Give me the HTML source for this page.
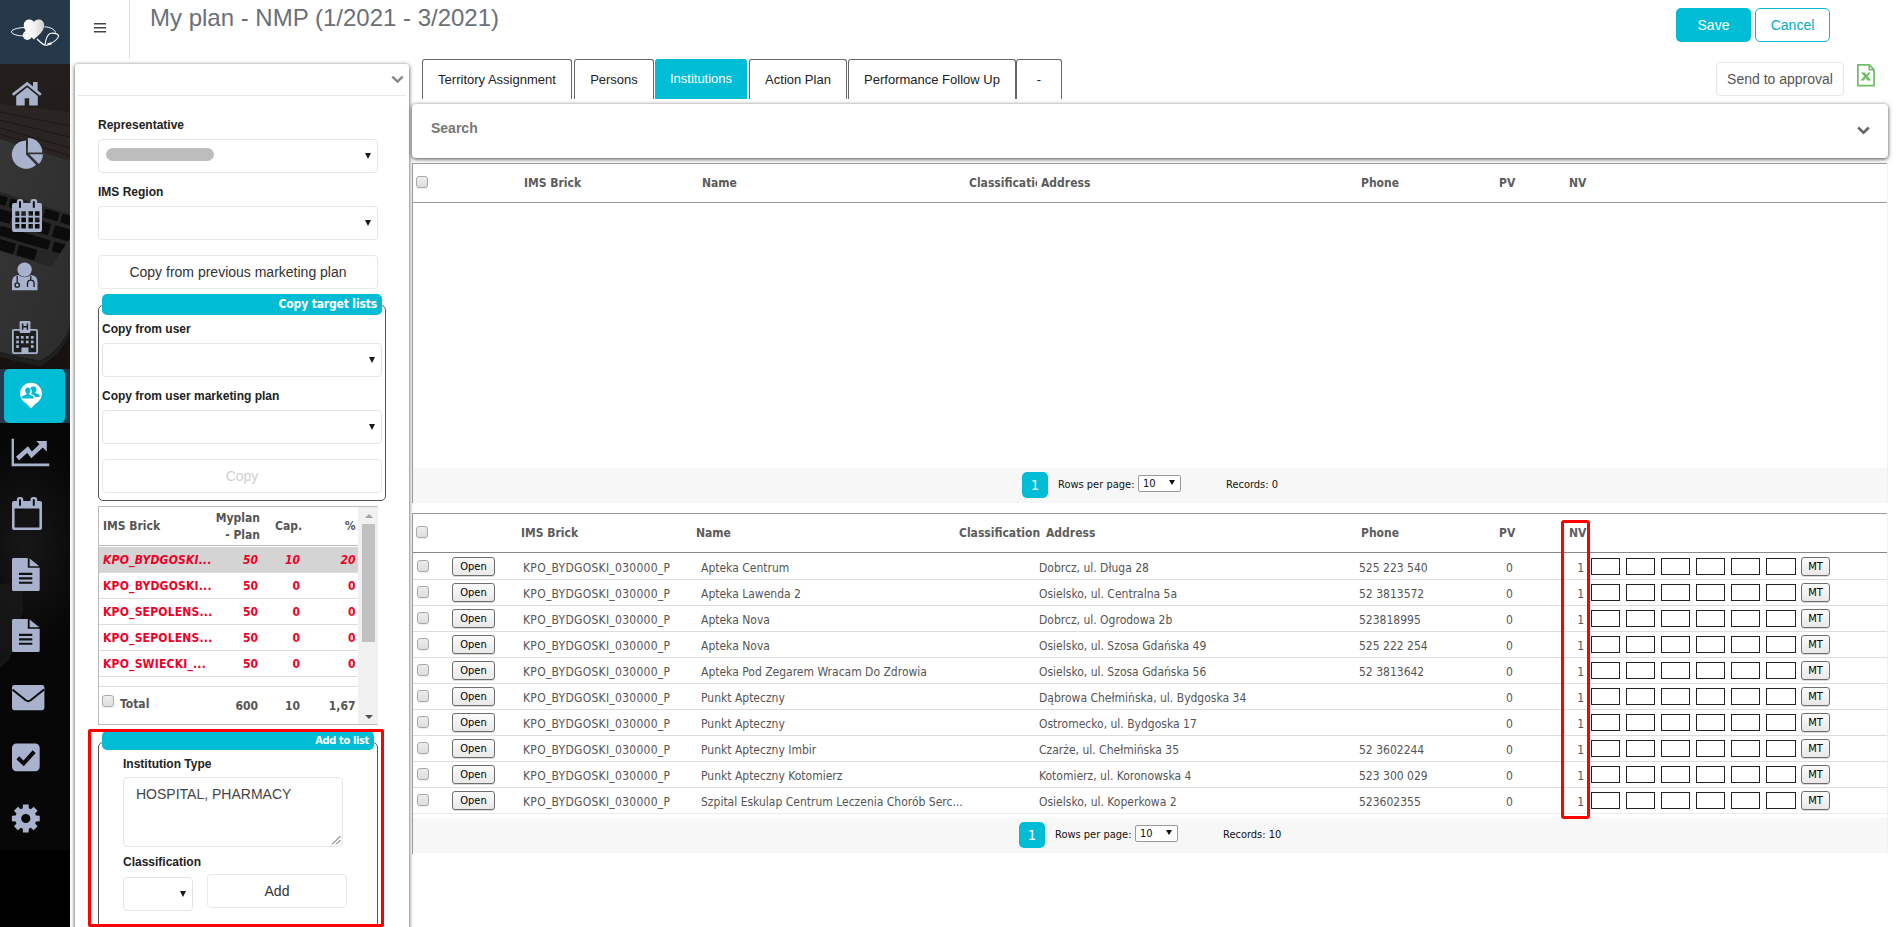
<!DOCTYPE html>
<html lang="en"><head><meta charset="utf-8"><title>My plan - NMP</title>
<style>
*{box-sizing:border-box}
html,body{margin:0;padding:0}
body{width:1897px;height:927px;overflow:hidden;background:#fff;position:relative;font-family:"Liberation Sans",sans-serif;color:#222}
#sb{position:absolute;left:0;top:0;width:70px;height:927px;background:#000;overflow:hidden}
#sb .logo{position:absolute;left:0;top:0;width:70px;height:64px;background:#26394a}
#sb svg.bg{position:absolute;left:0;top:64px}
#sb .ic{position:absolute;fill:#a8b2cd}
#sb .actband{position:absolute;left:0;top:369px;width:70px;height:54px;background:#263849}
#sb .act{position:absolute;left:4px;top:369px;width:61px;height:54px;background:#00bcd4;border-radius:5px}
#hdr .burger{position:absolute;left:94px;top:23px}
#hdr .vline{position:absolute;left:129px;top:0;width:1px;height:59px;background:#dcdcdc}
#hdr h1{position:absolute;left:150px;top:3px;margin:0;font-size:24px;font-weight:normal;color:#6a6f78;line-height:30px;white-space:nowrap}
.btn{position:absolute;top:8px;height:34px;width:75px;border-radius:5px;font-size:14px;line-height:34px;text-align:center}
.btn.save{left:1676px;background:#00bcd4;color:#fff}
.btn.cancel{left:1755px;border:1px solid #00bcd4;color:#00acc8;line-height:32px;background:#fff}
/* left panel */
#lp{position:absolute;left:75px;top:64px;width:334px;height:900px;background:#fff;border-radius:3px;box-shadow:0 1px 4px rgba(0,0,0,.75)}
#lp .in{position:absolute;left:0;top:-1px;width:334px;height:900px}
#lp .chev{position:absolute;left:316px;top:12px}
#lp .hl{position:absolute;left:3px;top:32px;width:328px;height:1px;background:#e1e8ec}
.lbl{position:absolute;font-size:12px;font-weight:bold;color:#222;white-space:nowrap;line-height:14px}
.selbox{position:absolute;height:34px;border:1px solid #e3e6e8;border-radius:4px;background:#fff}
.selbox:after{content:"";position:absolute;right:6.5px;top:12.8px;border-left:3.5px solid transparent;border-right:3.5px solid transparent;border-top:6px solid #1a1a1a}
.wbtn{position:absolute;height:34px;border:1px solid #e6e8ea;border-radius:4px;background:#fff;font-size:14px;line-height:32px;text-align:center;color:#333;white-space:nowrap}
.fs{position:absolute;border:1px solid #555;border-radius:5px}
.lg{position:absolute;background:#00bcd4;border-radius:5px;color:#fff;font-family:"DejaVu Sans Condensed","DejaVu Sans",sans-serif;font-stretch:condensed;font-weight:bold;font-size:12px;text-align:right;white-space:nowrap;letter-spacing:-.4px}
/* brick table */
#bt{position:absolute;left:23px;top:443px;width:280px;height:219px;border:1px solid #bbb;border-right-color:#f1f1f1;font-family:"DejaVu Sans Condensed","DejaVu Sans",sans-serif;font-stretch:condensed;font-size:12px;font-weight:bold;overflow:hidden;background:#fff}
#bt .hd{position:absolute;left:0;top:0;width:260px;height:38px;border-bottom:1px solid #bbb;color:#555}
#bt .hd span{position:absolute;white-space:nowrap;line-height:17px}
#bt .br{position:absolute;left:0;width:260px;height:26px;border-bottom:1px solid #ddd;color:#f00028;line-height:26px}
#bt .br.sel{background:#d4d4d4;font-style:italic}
#bt .br span{position:absolute;top:0;white-space:nowrap}
#bt .b1{left:4px;letter-spacing:.2px}
#bt .b2{right:101px}
#bt .b3{right:59px}
#bt .b4{right:3.5px}
#bt .tot{position:absolute;left:0;top:178px;width:260px;height:38px;border-top:1px solid #ddd;color:#555;font-size:12px}
#bt .tot span{position:absolute;white-space:nowrap;line-height:16px}
#bt .sc{position:absolute;left:259px;top:-1px;width:19px;height:218px;background:#f1f1f1}
#bt .sc .th{position:absolute;left:4px;top:17px;width:13px;height:118px;background:#c1c1c1}
#bt .sc .up{position:absolute;left:6.5px;top:7px;border-left:4px solid transparent;border-right:4px solid transparent;border-bottom:4px solid #a3a3a3}
#bt .sc .dn{position:absolute;left:6.5px;top:208px;border-left:4px solid transparent;border-right:4px solid transparent;border-top:4px solid #505050}
.cb{position:absolute;width:12px;height:12px;border:1px solid #a9a9a9;border-radius:3px;background:linear-gradient(#ededed,#dedede);box-shadow:0 1px 1px rgba(0,0,0,.08)}
.ta{position:absolute;border:1px solid #e3e6e8;border-radius:4px;font-size:14px;color:#444;white-space:nowrap}
/* tabs */
.tab{position:absolute;top:59px;height:40px;border:1px solid #666;border-bottom:none;border-radius:3px 3px 0 0;font-size:13px;line-height:39px;text-align:center;color:#222;background:#fff;white-space:nowrap}
.tab.act{background:#00bcd4;border-color:#00bcd4;color:#fff;line-height:37px}
.send{position:absolute;left:1716px;top:62px;width:128px;height:34px;border:1px solid #e6e6e6;border-radius:4px;font-size:14px;line-height:32px;text-align:center;color:#555;white-space:nowrap}
.xls{position:absolute;left:1857px;top:64px}
#search{position:absolute;left:412px;top:104px;width:1476px;height:54px;background:#fff;border-radius:4px;box-shadow:0 1px 4px rgba(0,0,0,.75)}
#search span{position:absolute;left:19px;top:16px;font-size:14px;font-weight:bold;color:#777;line-height:16px}
#search svg{position:absolute;left:1445px;top:22px}
/* grids */
.grid{position:absolute;left:412px;width:1476px;font-family:"DejaVu Sans Condensed","DejaVu Sans",sans-serif;font-stretch:condensed;font-size:12px;color:#555}
.grid:before{content:"";position:absolute;left:0;top:0;bottom:0;width:1px;background:#999;z-index:2}
#g1{top:163px;height:340px}
#g2{top:513px;height:341px}
.gh{position:absolute;left:0;top:0;width:1475px;height:40px;border-top:1px solid #999;border-bottom:1px solid #999}
.gh b{position:absolute;top:11px;line-height:16px;font-size:12px;white-space:nowrap;color:#5c5c5c}
#g2 .gh{border-bottom:1px solid #888}
.pg{position:absolute;left:0;width:1475px;height:35px;background:#f7f7f7;font-size:11px;color:#111}
.pg .p1{position:absolute;top:4px;width:26px;height:26px;background:#00bcd4;border-radius:5px;color:#fff;font-size:14px;line-height:26px;text-align:center}
.pg .t{position:absolute;top:10px;line-height:14px;white-space:nowrap}
.pg .sel{position:absolute;top:7px;width:43px;height:17px;border:1px solid #999;border-radius:2px;background:#fff;line-height:16px;padding-left:4px}
.pg .sel i{position:absolute;right:5.5px;top:3.5px;border-left:3.2px solid transparent;border-right:3.2px solid transparent;border-top:5.5px solid #111}
.r{position:absolute;left:0;width:1475px;height:26px;border-bottom:1px solid #ddd}
.r .c{position:absolute;top:6.6px;line-height:15px;white-space:nowrap}
.r .brick{left:111px;letter-spacing:.27px}
.r .nv{left:1160px;width:12px;text-align:right}
.ob,.mt{position:absolute;top:3px;height:19px;border:1px solid #6e6e6e;border-radius:3px;background:linear-gradient(#fbfbfb,#e9e9e9);color:#000;font-size:11px;line-height:17px;text-align:center;box-shadow:0 1px 0 rgba(0,0,0,.15)}
.ob{left:40px;width:43px}
.mt{left:1389px;width:29px}
.bx{position:absolute;top:4px;width:29.5px;height:17px;border:1.5px solid #222;background:#fff}
.red{position:absolute;border:3px solid #f00;border-radius:3px}
.r.last{border-bottom-color:#ececec}
#bt .w{position:absolute;left:0;top:1px;width:279px;height:218px}
.grid:after{content:"";position:absolute;right:0;top:0;bottom:0;width:1px;background:#f2f2f2}

</style></head>
<body>
<div id="sb">
<svg class="bg" width="70" height="786" viewBox="0 64 70 786">
<defs><linearGradient id="lg1" x1="0" y1="0" x2="0" y2="1"><stop offset="0" stop-color="#241f1c"/><stop offset="1" stop-color="#1f1b19"/></linearGradient>
<radialGradient id="rg"><stop offset="0" stop-color="#171717"/><stop offset="1" stop-color="#060606"/></radialGradient><linearGradient id="lg2" x1="0" y1="0" x2="1" y2="1"><stop offset="0" stop-color="#363636"/><stop offset="1" stop-color="#2c2c2c"/></linearGradient></defs>
<rect x="0" y="64" width="70" height="786" fill="#060606"/>
<rect x="0" y="64" width="70" height="110" fill="url(#lg1)"/>
<path d="M0 104 L70 112 L70 161 L0 139Z" fill="#2a2522"/><path d="M0 112 L70 126 M0 120 L70 137 M0 128 L70 148 M0 134 L70 156" stroke="#1d1917" stroke-width="1.2" fill="none"/><path d="M0 139 L70 161 L70 326 Q62 350 40 361 Q20 358 0 352Z" fill="url(#lg2)"/>
<clipPath id="kb"><path d="M0 192 L70 214 L70 238 L51 267 L0 251Z"/></clipPath><g clip-path="url(#kb)"><rect x="0" y="185" width="70" height="90" fill="#262626"/><g transform="translate(0 193) rotate(16.5)" fill="#0b0b0b"><rect x="-6" y="2" width="15" height="9" rx="1.5"/><rect x="12" y="2" width="15" height="9" rx="1.5"/><rect x="30" y="2" width="15" height="9" rx="1.5"/><rect x="48" y="2" width="15" height="9" rx="1.5"/><rect x="66" y="2" width="14" height="9" rx="1.5"/><rect x="-12" y="15" width="30" height="12" rx="1.5"/><rect x="22" y="15" width="17" height="12" rx="1.5"/><rect x="43" y="15" width="15" height="12" rx="1.5"/><rect x="62" y="15" width="18" height="12" rx="1.5"/><rect x="-8" y="31" width="14" height="10" rx="1.5"/><rect x="10" y="31" width="52" height="10" rx="1.5"/><rect x="66" y="31" width="14" height="10" rx="1.5"/><rect x="-10" y="44" width="12" height="11" rx="1.5"/><rect x="6" y="44" width="24" height="11" rx="1.5"/><rect x="33" y="44" width="19" height="11" rx="1.5"/></g></g>
<path d="M0 352 Q20 358 40 361 Q62 350 70 326 L70 369 L0 369Z" fill="#17110f"/>
<path d="M0 352 Q20 358 40 361 Q62 350 70 326 L70 332 Q62 355 40 366 Q20 363 0 357Z" fill="#1f1f1f"/>
<ellipse cx="25" cy="545" rx="70" ry="110" fill="url(#rg)"/><path d="M0 585 L0 668 L9 660 L16 640 L23 610 L22 580Z" fill="#1b1b1b" opacity=".7"/>
</svg>
<div class="logo"></div>
<svg style="position:absolute;left:0;top:0" width="70" height="64" viewBox="0 0 70 64">
<defs><linearGradient id="hg" x1="0" y1="0" x2="1" y2="0"><stop offset="0" stop-color="#fff"/><stop offset=".5" stop-color="#f4f4f4"/><stop offset="1" stop-color="#cfcfcf"/></linearGradient></defs>
<path d="M24 27.5 C16 28 11 30 11.5 32 C12 34.5 18 35.8 24 36" fill="none" stroke="#fff" stroke-width="1"/>
<path d="M44.5 26.8 C50 27 55 29.5 55.5 32.5" fill="none" stroke="#fff" stroke-width="1"/>
<path d="M34 39.5 C30 36 23.8 31 23.8 25.5 C23.8 21.5 26.6 19.6 29.5 19.6 C31.6 19.6 33.2 20.8 34 22 C34.8 20.8 36.4 19.6 38.5 19.6 C41.4 19.6 44.2 21.5 44.2 25.5 C44.2 31 38 36 34 39.5Z" fill="url(#hg)"/>
<circle cx="27.4" cy="35.3" r="4.6" fill="#fff"/><circle cx="26.6" cy="35.6" r="2.6" fill="none" stroke="#e4e4e4" stroke-width="1"/>
<path d="M37 39 C40 42 42.5 44.5 45.5 45.3" fill="none" stroke="#fff" stroke-width="1.2"/>
<path d="M45 45.2 C45.5 40 47.5 35 50 33.5 C53 32.6 57.5 33.3 58.7 35.5 C58 39 53 42.5 49.5 44.2 L46 45.5" fill="none" stroke="#fff" stroke-width="1.1"/>
<rect x="47.5" y="42.7" width="4" height="2.2" fill="#fff" transform="rotate(-12 49.5 43.8)"/>
</svg>
<svg class="ic" style="left:11px;top:81px" width="32" height="25" viewBox="0 0 32 25" ><path d="M0.9 12.8 L16.2 0.7 L30.7 12.8 L29 14.8 L16.2 4.2 L2.6 14.8Z"/><rect x="22" y="1" width="4.6" height="8"/><path d="M5.2 15 L16.2 6.2 L26.8 15 V24.4 H18.2 V17.3 H13.7 V24.4 H5.2Z"/></svg>
<svg class="ic" style="left:11px;top:137px" width="33" height="32" viewBox="0 0 33 32" ><path d="M15 17.6 L15 3.400000000000002 A14.2 14.2 0 1 0 25.04 27.64Z"/><path d="M16.9 15.5 V1.1 A14.4 14.4 0 0 1 31.3 15.5Z"/><path d="M18.3 17.3 H31.9 A13.6 13.6 0 0 1 27.9 26.9Z"/></svg>
<svg class="ic" style="left:12px;top:199px" width="30" height="33" viewBox="0 0 30 33" ><path fill-rule="evenodd" d="M2 4 H28 a2 2 0 0 1 2 2 V31 a2 2 0 0 1 -2 2 H2 a2 2 0 0 1 -2 -2 V6 a2 2 0 0 1 2-2Z M3.3 12.2H7.4V16.7H3.3Z M3.3 18.4H7.4V23.2H3.3Z M3.3 25.1H7.4V29.6H3.3Z M9.3 12.2H13.9V16.7H9.3Z M9.3 18.4H13.9V23.2H9.3Z M9.3 25.1H13.9V29.6H9.3Z M16.5 12.2H21V16.7H16.5Z M16.5 18.4H21V23.2H16.5Z M16.5 25.1H21V29.6H16.5Z M22.9 12.2H27.5V16.7H22.9Z M22.9 18.4H27.5V23.2H22.9Z M22.9 25.1H27.5V29.6H22.9Z "/><rect x="4.8" y="0" width="6.5" height="9.5" rx="3"/><rect x="18.4" y="0" width="6.9" height="9.5" rx="3"/><rect x="7" y="2.3" width="2" height="6.5" fill="#111"/><rect x="20.8" y="2.3" width="2" height="6.5" fill="#111"/></svg>
<svg class="ic" style="left:12px;top:262px" width="26" height="29" viewBox="0 0 26 29" ><circle cx="12.6" cy="7.6" r="7.2"/><path d="M0 28.3 V20 Q0 13.5 6.5 13 Q12.6 17.5 19 13 Q25.5 13.5 25.5 20 V28.3 Z"/><path d="M5.2 14 V20.5" stroke="#1c1c1c" stroke-width="1.3" fill="none"/><circle cx="5.2" cy="23" r="2.2" fill="none" stroke="#1c1c1c" stroke-width="1.3"/><path d="M15.5 25 V21.5 a3.3 3.3 0 0 1 6.6 0 V25 M18.8 14 V18" stroke="#1c1c1c" stroke-width="1.3" fill="none"/></svg>
<svg class="ic" style="left:12px;top:321px" width="26" height="33" viewBox="0 0 26 33" ><rect x="0.9" y="8.9" width="24.2" height="23.2" rx="1" fill="#1d1d1d" stroke="#a8b2cd" stroke-width="1.8"/><rect x="7.6" y="0" width="10.8" height="11.9" rx="1.2" fill="#a8b2cd"/><path d="M10.6 2.6 V8.8 M15.4 2.6 V8.8 M10.6 5.7 H15.4" stroke="#1d1d1d" stroke-width="1.5" fill="none"/><rect x="4.2" y="15" width="2.7" height="2.7"/><rect x="4.2" y="19.6" width="2.7" height="2.7"/><rect x="4.2" y="24.2" width="2.7" height="2.7"/><rect x="8.9" y="15" width="2.7" height="2.7"/><rect x="8.9" y="19.6" width="2.7" height="2.7"/><rect x="13.9" y="15" width="2.7" height="2.7"/><rect x="13.9" y="19.6" width="2.7" height="2.7"/><rect x="18.9" y="15" width="2.7" height="2.7"/><rect x="18.9" y="19.6" width="2.7" height="2.7"/><rect x="18.9" y="24.2" width="2.7" height="2.7"/><rect x="9.5" y="26.5" width="7" height="6"/></svg>
<div class="actband"></div><div class="act"></div>
<svg style="position:absolute;left:19px;top:381px" width="24" height="29" viewBox="0 0 24 29">
<circle cx="12" cy="12.6" r="10.9" fill="#fff"/><path d="M6 21 L12 27.4 L18 21Z" fill="#fff"/>
<g fill="#00bcd4"><path d="M8.8 6.6 c1.6 0 2.7 1.2 2.7 2.9 c0 1.3-.6 2.3-1.3 2.9 v1 c1.6.6 3.6 1.2 4.2 2 c.4.5.5 1.3.5 2.1 H2.8 c0-.8.1-1.6.5-2.1 c.6-.8 2.6-1.4 4.2-2 v-1 c-.7-.6-1.3-1.6-1.3-2.9 c0-1.7 1.100-2.9 2.600-2.900Z"/>
<path d="M14.900 5.600 c1.500 0 2.600 1.200 2.600 2.800 c0 1.200-.5 2.200-1.200 2.800 v.9 c1.500.6 3.300 1.100 3.900 1.900 c.4.500.5 1.200.5 2 H16 c-.2-.8-.6-1.300-1.300-1.700 c-.8-.5-1.900-.9-2.800-1.200 c.5-.7.900-1.500.9-2.600 c0-1.500-.6-2.500-1.500-3.100 c.4-1.100 1.400-1.800 2.600-1.800Z"/></g></svg>
<svg class="ic" style="left:11px;top:438px" width="39" height="29" viewBox="0 0 39 29" ><path d="M0.6 0.8 H3 V25.5 H38.2 V28.3 H0.6Z"/><path d="M6.5 20.5 L16.6 11.6 L20.6 16.9 L31 7" fill="none" stroke="#a8b2cd" stroke-width="4.6"/><path d="M25.2 3 H35.8 V13.6Z"/></svg>
<svg class="ic" style="left:12px;top:497px" width="30" height="33" viewBox="0 0 30 33" ><path fill-rule="evenodd" d="M2 4 H28 a2 2 0 0 1 2 2 V31 a2 2 0 0 1 -2 2 H2 a2 2 0 0 1 -2 -2 V6 a2 2 0 0 1 2-2Z M2.6 11.6 H27.4 V30.4 H2.6Z"/><rect x="4.8" y="0" width="6.5" height="9.5" rx="3"/><rect x="18.4" y="0" width="6.9" height="9.5" rx="3"/><rect x="7" y="2.3" width="2" height="6.5" fill="#111"/><rect x="20.8" y="2.3" width="2" height="6.5" fill="#111"/></svg>
<svg class="ic" style="left:12px;top:558px" width="28" height="33" viewBox="0 0 28 33" ><path d="M1.5 0 H15.8 V9.8 H27.7 V31.5 a1.5 1.5 0 0 1 -1.5 1.5 H1.5 a1.5 1.5 0 0 1 -1.5 -1.5 V1.5 a1.5 1.5 0 0 1 1.5-1.5Z"/><path d="M17.6 0.4 L27.3 8.2 H17.6Z"/><path d="M7 15.9 H20.3 M7 20.4 H20.3 M7 24.7 H20.3" stroke="#111" stroke-width="2.1" fill="none"/></svg>
<svg class="ic" style="left:12px;top:619px" width="28" height="33" viewBox="0 0 28 33" ><path d="M1.5 0 H15.8 V9.8 H27.7 V31.5 a1.5 1.5 0 0 1 -1.5 1.5 H1.5 a1.5 1.5 0 0 1 -1.5 -1.5 V1.5 a1.5 1.5 0 0 1 1.5-1.5Z"/><path d="M17.6 0.4 L27.3 8.2 H17.6Z"/><path d="M7 15.9 H20.3 M7 20.4 H20.3 M7 24.7 H20.3" stroke="#111" stroke-width="2.1" fill="none"/></svg>
<svg class="ic" style="left:12px;top:685px" width="33" height="26" viewBox="0 0 33 26" ><rect x="0" y="0" width="32.4" height="25.2" rx="2.6"/><path d="M0.3 4.5 L13.8 15.2 Q16.2 17 18.6 15.2 L32.1 4.5" fill="none" stroke="#0a0a0a" stroke-width="2"/></svg>
<svg class="ic" style="left:12px;top:743px" width="28" height="29" viewBox="0 0 28 29" ><rect x="0" y="0.4" width="27.7" height="27.9" rx="4.5"/><path d="M5.8 14.8 L11.6 20.4 L22.2 8.6" fill="none" stroke="#0a0a0a" stroke-width="4"/></svg>
<svg class="ic" style="left:11px;top:804px" width="30" height="30" viewBox="0 0 30 30" ><path fill-rule="evenodd" d="M11.77 4.34 L11.98 0.58 L17.62 0.58 L17.83 4.34 L19.84 5.17 L22.65 2.66 L26.64 6.65 L24.13 9.46 L24.96 11.47 L28.72 11.68 L28.72 17.32 L24.96 17.53 L24.13 19.54 L26.64 22.35 L22.65 26.34 L19.84 23.83 L17.83 24.66 L17.62 28.42 L11.98 28.42 L11.77 24.66 L9.76 23.83 L6.95 26.34 L2.96 22.35 L5.47 19.54 L4.64 17.53 L0.88 17.32 L0.88 11.68 L4.64 11.47 L5.47 9.46 L2.96 6.65 L6.95 2.66 L9.76 5.17Z M10.20 14.50a4.6 4.6 0 1 0 9.2 0a4.6 4.6 0 1 0 -9.2 0Z"/></svg>
</div>
<div id="hdr">
<svg class="burger" width="12" height="10" viewBox="0 0 12 10"><path d="M0 .7h12M0 4.7h12M0 8.7h12" stroke="#444" stroke-width="1.6"/></svg>
<div class="vline"></div>
<h1>My plan - NMP (1/2021 - 3/2021)</h1>
<div class="btn save">Save</div><div class="btn cancel">Cancel</div>
</div>
<div id="lp"><div class="in">
<svg class="chev" width="13" height="9" viewBox="0 0 13 9"><path d="M1.3 1.6l5.2 5 5.2-5" fill="none" stroke="#888" stroke-width="2.5"/></svg>
<div class="hl"></div>
<div class="lbl" style="left:23px;top:55px">Representative</div>
<div class="selbox" style="left:23px;top:76px;width:280px"><i style="position:absolute;left:7px;top:8px;width:108px;height:13px;border-radius:7px;background:#bdbdbd"></i></div>
<div class="lbl" style="left:23px;top:122px">IMS Region</div>
<div class="selbox" style="left:23px;top:143px;width:280px"></div>
<div class="wbtn" style="left:23px;top:192px;width:280px">Copy from previous marketing plan</div>
<div class="fs" style="left:23px;top:242px;width:288px;height:196px"></div>
<div class="lg" style="left:27px;top:231px;width:280px;height:21px;line-height:21px;padding-right:5px;letter-spacing:-.15px">Copy target lists</div>
<div class="lbl" style="left:27px;top:259px">Copy from user</div>
<div class="selbox" style="left:27px;top:280px;width:280px"></div>
<div class="lbl" style="left:27px;top:326px">Copy from user marketing plan</div>
<div class="selbox" style="left:27px;top:347px;width:280px"></div>
<div class="wbtn" style="left:27px;top:396px;width:280px;color:#cfcfcf">Copy</div>
<div id="bt"><div class="w">
<div class="hd"><span style="left:4px;top:10px">IMS Brick</span><span style="right:99px;top:2px;text-align:right">Myplan<br>- Plan</span><span style="right:57px;top:10px">Cap.</span><span style="right:3.5px;top:10px">%</span></div>
<div class="br sel" style="top:39px"><span class="b1">KPO_BYDGOSKI...</span><span class="b2">50</span><span class="b3">10</span><span class="b4">20</span></div>
<div class="br" style="top:65px"><span class="b1">KPO_BYDGOSKI...</span><span class="b2">50</span><span class="b3">0</span><span class="b4">0</span></div>
<div class="br" style="top:91px"><span class="b1">KPO_SEPOLENS...</span><span class="b2">50</span><span class="b3">0</span><span class="b4">0</span></div>
<div class="br" style="top:117px"><span class="b1">KPO_SEPOLENS...</span><span class="b2">50</span><span class="b3">0</span><span class="b4">0</span></div>
<div class="br" style="top:143px"><span class="b1">KPO_SWIECKI_...</span><span class="b2">50</span><span class="b3">0</span><span class="b4">0</span></div>

<div class="tot"><i class="cb" style="left:3px;top:8px"></i><span style="left:21px;top:9px">Total</span><span style="right:101px;top:11px">600</span><span style="right:59px;top:11px">10</span><span style="right:3.5px;top:11px">1,67</span></div>
<div class="sc"><i class="up"></i><i class="th"></i><i class="dn"></i></div>
</div></div>
<div class="fs" style="left:23px;top:679px;width:280px;height:260px"></div>
<div class="lg" style="left:27px;top:668px;width:272px;height:19px;line-height:20px;padding-right:5px;font-size:11px;letter-spacing:-.35px">Add to list</div>
<div class="lbl" style="left:48px;top:694px">Institution Type</div>
<div class="ta" style="left:48px;top:714px;width:220px;height:70px;padding:7px 0 0 12px;line-height:18px">HOSPITAL, PHARMACY<svg style="position:absolute;right:1px;bottom:1px" width="10" height="10" viewBox="0 0 10 10"><path d="M1 9.5L9.5 1M5 9.5L9.5 5" stroke="#555" stroke-width="1" fill="none"/></svg></div>
<div class="lbl" style="left:48px;top:792px">Classification</div>
<div class="selbox" style="left:48px;top:814px;width:70px"></div>
<div class="wbtn" style="left:132px;top:811px;width:140px">Add</div>
</div></div>

<div id="tabs">
<div class="tab" style="left:422px;width:150px">Territory Assignment</div>
<div class="tab" style="left:574px;width:80px">Persons</div>
<div class="tab act" style="left:655px;width:92px">Institutions</div>
<div class="tab" style="left:749px;width:98px">Action Plan</div>
<div class="tab" style="left:848px;width:168px">Performance Follow Up</div>
<div class="tab" style="left:1016px;width:46px">-</div>
</div>
<div class="send">Send to approval</div>
<svg class="xls" width="18" height="23" viewBox="0 0 18 23"><path d="M0.9 0.9 H12.2 L17.1 5.8 V21.7 H0.9Z" fill="#fff" stroke="#6fbe66" stroke-width="1.7"/><path d="M12.2 0.9 V5.8 H17.1" fill="none" stroke="#6fbe66" stroke-width="1.5"/><path d="M3.9 8.5 H8 L9.6 10.7 L11.3 8.5 H13.7 L10.7 12.3 L14.3 16.4 H10.4 L8.6 14 L6.8 16.4 H3.4 L7.2 12.2Z" fill="#6fbe66"/></svg>
<div id="search"><span>Search</span><svg width="13" height="9" viewBox="0 0 13 9"><path d="M1.2 1.5l5.3 5.2 5.3-5.2" fill="none" stroke="#666" stroke-width="2.5"/></svg></div>

<div id="g1" class="grid">
<div class="gh"><i class="cb" style="left:4px;top:12px"></i><b style="left:112px">IMS Brick</b><b style="left:290px">Name</b><b style="left:557px;width:68px;overflow:hidden">Classification</b><b style="left:629px">Address</b><b style="left:949px">Phone</b><b style="left:1087px">PV</b><b style="left:1157px">NV</b></div>
<div class="pg" style="top:305px"><span class="p1" style="left:610px">1</span><span class="t" style="left:646px">Rows per page:</span><span class="sel" style="left:726px">10<i></i></span><span class="t" style="left:814px">Records: 0</span></div>
</div>

<div id="g2" class="grid">
<div class="gh"><i class="cb" style="left:4px;top:12px"></i><b style="left:109px">IMS Brick</b><b style="left:284px">Name</b><b style="left:547px">Classification</b><b style="left:634px">Address</b><b style="left:949px">Phone</b><b style="left:1087px">PV</b><b style="left:1157px">NV</b></div>
<div class="r" style="top:41px"><i class="cb" style="left:5px;top:6px"></i><span class="ob">Open</span><span class="c brick">KPO_BYDGOSKI_030000_P</span><span class="c" style="left:289px">Apteka Centrum</span><span class="c" style="left:627px">Dobrcz, ul. Długa 28</span><span class="c" style="left:947px">525 223 540</span><span class="c" style="left:1094px">0</span><span class="c nv">1</span><i class="bx" style="left:1178.5px"></i><i class="bx" style="left:1213.6px"></i><i class="bx" style="left:1248.7px"></i><i class="bx" style="left:1283.8px"></i><i class="bx" style="left:1318.9px"></i><i class="bx" style="left:1354.0px"></i><span class="mt">MT</span></div>
<div class="r" style="top:67px"><i class="cb" style="left:5px;top:6px"></i><span class="ob">Open</span><span class="c brick">KPO_BYDGOSKI_030000_P</span><span class="c" style="left:289px">Apteka Lawenda 2</span><span class="c" style="left:627px">Osielsko, ul. Centralna 5a</span><span class="c" style="left:947px">52 3813572</span><span class="c" style="left:1094px">0</span><span class="c nv">1</span><i class="bx" style="left:1178.5px"></i><i class="bx" style="left:1213.6px"></i><i class="bx" style="left:1248.7px"></i><i class="bx" style="left:1283.8px"></i><i class="bx" style="left:1318.9px"></i><i class="bx" style="left:1354.0px"></i><span class="mt">MT</span></div>
<div class="r" style="top:93px"><i class="cb" style="left:5px;top:6px"></i><span class="ob">Open</span><span class="c brick">KPO_BYDGOSKI_030000_P</span><span class="c" style="left:289px">Apteka Nova</span><span class="c" style="left:627px">Dobrcz, ul. Ogrodowa 2b</span><span class="c" style="left:947px">523818995</span><span class="c" style="left:1094px">0</span><span class="c nv">1</span><i class="bx" style="left:1178.5px"></i><i class="bx" style="left:1213.6px"></i><i class="bx" style="left:1248.7px"></i><i class="bx" style="left:1283.8px"></i><i class="bx" style="left:1318.9px"></i><i class="bx" style="left:1354.0px"></i><span class="mt">MT</span></div>
<div class="r" style="top:119px"><i class="cb" style="left:5px;top:6px"></i><span class="ob">Open</span><span class="c brick">KPO_BYDGOSKI_030000_P</span><span class="c" style="left:289px">Apteka Nova</span><span class="c" style="left:627px">Osielsko, ul. Szosa Gdańska 49</span><span class="c" style="left:947px">525 222 254</span><span class="c" style="left:1094px">0</span><span class="c nv">1</span><i class="bx" style="left:1178.5px"></i><i class="bx" style="left:1213.6px"></i><i class="bx" style="left:1248.7px"></i><i class="bx" style="left:1283.8px"></i><i class="bx" style="left:1318.9px"></i><i class="bx" style="left:1354.0px"></i><span class="mt">MT</span></div>
<div class="r" style="top:145px"><i class="cb" style="left:5px;top:6px"></i><span class="ob">Open</span><span class="c brick">KPO_BYDGOSKI_030000_P</span><span class="c" style="left:289px">Apteka Pod Zegarem Wracam Do Zdrowia</span><span class="c" style="left:627px">Osielsko, ul. Szosa Gdańska 56</span><span class="c" style="left:947px">52 3813642</span><span class="c" style="left:1094px">0</span><span class="c nv">1</span><i class="bx" style="left:1178.5px"></i><i class="bx" style="left:1213.6px"></i><i class="bx" style="left:1248.7px"></i><i class="bx" style="left:1283.8px"></i><i class="bx" style="left:1318.9px"></i><i class="bx" style="left:1354.0px"></i><span class="mt">MT</span></div>
<div class="r" style="top:171px"><i class="cb" style="left:5px;top:6px"></i><span class="ob">Open</span><span class="c brick">KPO_BYDGOSKI_030000_P</span><span class="c" style="left:289px">Punkt Apteczny</span><span class="c" style="left:627px">Dąbrowa Chełmińska, ul. Bydgoska 34</span><span class="c" style="left:947px"></span><span class="c" style="left:1094px">0</span><span class="c nv">1</span><i class="bx" style="left:1178.5px"></i><i class="bx" style="left:1213.6px"></i><i class="bx" style="left:1248.7px"></i><i class="bx" style="left:1283.8px"></i><i class="bx" style="left:1318.9px"></i><i class="bx" style="left:1354.0px"></i><span class="mt">MT</span></div>
<div class="r" style="top:197px"><i class="cb" style="left:5px;top:6px"></i><span class="ob">Open</span><span class="c brick">KPO_BYDGOSKI_030000_P</span><span class="c" style="left:289px">Punkt Apteczny</span><span class="c" style="left:627px">Ostromecko, ul. Bydgoska 17</span><span class="c" style="left:947px"></span><span class="c" style="left:1094px">0</span><span class="c nv">1</span><i class="bx" style="left:1178.5px"></i><i class="bx" style="left:1213.6px"></i><i class="bx" style="left:1248.7px"></i><i class="bx" style="left:1283.8px"></i><i class="bx" style="left:1318.9px"></i><i class="bx" style="left:1354.0px"></i><span class="mt">MT</span></div>
<div class="r" style="top:223px"><i class="cb" style="left:5px;top:6px"></i><span class="ob">Open</span><span class="c brick">KPO_BYDGOSKI_030000_P</span><span class="c" style="left:289px">Punkt Apteczny Imbir</span><span class="c" style="left:627px">Czarże, ul. Chełmińska 35</span><span class="c" style="left:947px">52 3602244</span><span class="c" style="left:1094px">0</span><span class="c nv">1</span><i class="bx" style="left:1178.5px"></i><i class="bx" style="left:1213.6px"></i><i class="bx" style="left:1248.7px"></i><i class="bx" style="left:1283.8px"></i><i class="bx" style="left:1318.9px"></i><i class="bx" style="left:1354.0px"></i><span class="mt">MT</span></div>
<div class="r" style="top:249px"><i class="cb" style="left:5px;top:6px"></i><span class="ob">Open</span><span class="c brick">KPO_BYDGOSKI_030000_P</span><span class="c" style="left:289px">Punkt Apteczny Kotomierz</span><span class="c" style="left:627px">Kotomierz, ul. Koronowska 4</span><span class="c" style="left:947px">523 300 029</span><span class="c" style="left:1094px">0</span><span class="c nv">1</span><i class="bx" style="left:1178.5px"></i><i class="bx" style="left:1213.6px"></i><i class="bx" style="left:1248.7px"></i><i class="bx" style="left:1283.8px"></i><i class="bx" style="left:1318.9px"></i><i class="bx" style="left:1354.0px"></i><span class="mt">MT</span></div>
<div class="r last" style="top:275px"><i class="cb" style="left:5px;top:6px"></i><span class="ob">Open</span><span class="c brick">KPO_BYDGOSKI_030000_P</span><span class="c" style="left:289px">Szpital Eskulap Centrum Leczenia Chorób Serc...</span><span class="c" style="left:627px">Osielsko, ul. Koperkowa 2</span><span class="c" style="left:947px">523602355</span><span class="c" style="left:1094px">0</span><span class="c nv">1</span><i class="bx" style="left:1178.5px"></i><i class="bx" style="left:1213.6px"></i><i class="bx" style="left:1248.7px"></i><i class="bx" style="left:1283.8px"></i><i class="bx" style="left:1318.9px"></i><i class="bx" style="left:1354.0px"></i><span class="mt">MT</span></div>

<div class="pg" style="top:305px"><span class="p1" style="left:607px">1</span><span class="t" style="left:643px">Rows per page:</span><span class="sel" style="left:723px">10<i></i></span><span class="t" style="left:811px">Records: 10</span></div>
</div>
<div class="red" style="left:1561px;top:520px;width:29px;height:299px"></div>
<div class="red" style="left:87.5px;top:728.5px;width:296.5px;height:198.5px;border-radius:2px"></div>
</body></html>
